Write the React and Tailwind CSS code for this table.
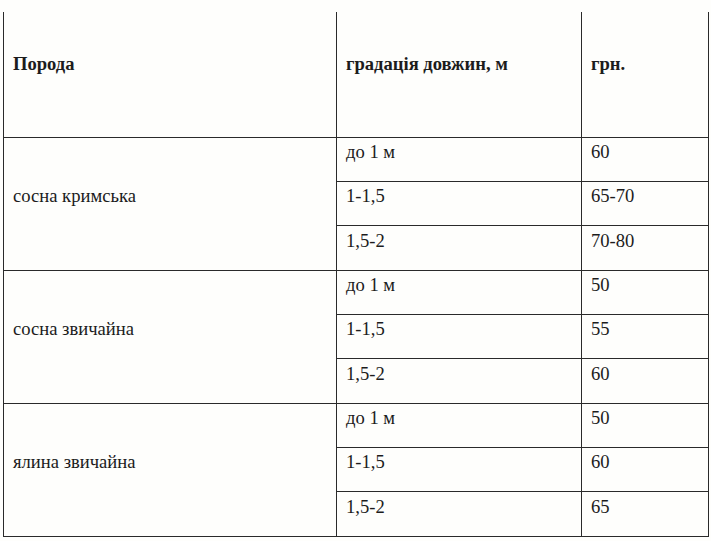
import React from "react";

const groups = [
  {
    name: "сосна кримська",
    rows: [
      ["до 1 м", "60"],
      ["1-1,5", "65-70"],
      ["1,5-2", "70-80"],
    ],
  },
  {
    name: "сосна звичайна",
    rows: [
      ["до 1 м", "50"],
      ["1-1,5", "55"],
      ["1,5-2", "60"],
    ],
  },
  {
    name: "ялина звичайна",
    rows: [
      ["до 1 м", "50"],
      ["1-1,5", "60"],
      ["1,5-2", "65"],
    ],
  },
];

const rowHeights = ["h-[44px]", "h-[45px]", "h-[44px]"];

const App = () => {
  return (
    <div className="w-[711px] h-[541px] bg-[#fefefc] text-[#1c1c1c] text-[18.6px] pt-[12px] pl-[3px] font-['Liberation_Serif','Times_New_Roman',serif]">
      <div className="w-[706px] border-l border-[#2a2a2a]">
        {/* шапка */}
        <div className="flex h-[126px] border-b border-[#2a2a2a] font-bold">
          <div className="w-[333px] border-r border-[#2a2a2a] flex items-center pl-[9px] pb-[22px]">
            Порода
          </div>
          <div className="w-[245px] border-r border-[#2a2a2a] flex items-center pl-[9px] pb-[22px]">
            градація довжин, м
          </div>
          <div className="w-[127px] border-r border-[#2a2a2a] flex items-center pl-[9px] pb-[22px]">
            грн.
          </div>
        </div>

        {groups.map((g) => (
          <div key={g.name} className="flex h-[133px] border-b border-[#2a2a2a]">
            <div className="w-[333px] border-r border-[#2a2a2a] flex items-center pl-[9px] pb-[17px]">
              {g.name}
            </div>
            <div className="w-[372px] flex flex-col">
              {g.rows.map(([len, price], i) => (
                <div
                  key={len}
                  className={`flex ${rowHeights[i]} ${i < 2 ? "border-b border-[#2a2a2a]" : ""}`}
                >
                  <div className="w-[245px] border-r border-[#2a2a2a] flex items-center pl-[9px] pb-[15px]">
                    {len}
                  </div>
                  <div className="w-[127px] border-r border-[#2a2a2a] flex items-center pl-[9px] pb-[15px]">
                    {price}
                  </div>
                </div>
              ))}
            </div>
          </div>
        ))}
      </div>
    </div>
  );
};

export default App;
